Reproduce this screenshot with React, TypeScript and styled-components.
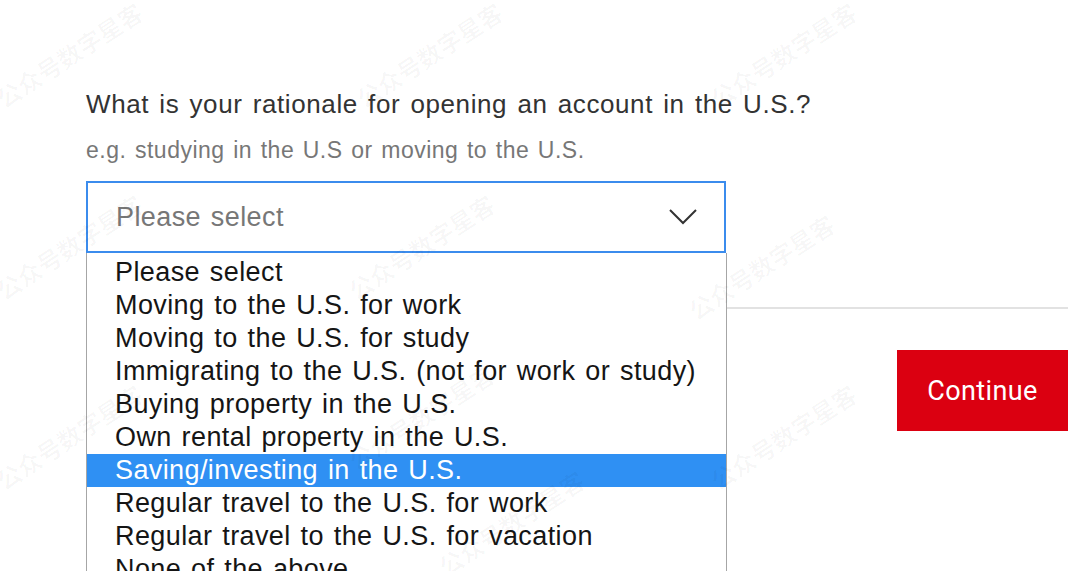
import React from "react";
import styled, { createGlobalStyle } from "styled-components";

const Global = createGlobalStyle`
  html, body { margin: 0; padding: 0; background: #fff; }
  body { font-family: "Liberation Sans", Arial, sans-serif; }
  * { box-sizing: border-box; }
`;

const Page = styled.div`
  position: relative;
  width: 1080px;
  height: 571px;
  overflow: hidden;
  background: #fff;
`;

const Form = styled.div`
  display: flex;
  flex-direction: column;
  width: 982px;
  margin-left: 86px;
  padding-top: 87px;
`;

const Question = styled.h2`
  margin: 0;
  font-weight: 400;
  font-size: 26px;
  line-height: 34px;
  letter-spacing: 0.6px;
  word-spacing: 2.4px;
  color: #333;
`;

const Hint = styled.p`
  margin: 16px 0 0 0;
  font-size: 23px;
  line-height: 26px;
  letter-spacing: 0.5px;
  word-spacing: 1.7px;
  color: #777;
`;

const SelectWrap = styled.div`
  position: relative;
  width: 640px;
  margin-top: 18px;
`;

const SelectBox = styled.div`
  display: flex;
  align-items: center;
  justify-content: space-between;
  height: 72px;
  border: 2px solid #3b8ced;
  padding: 0 26px 0 28px;
  font-size: 27px;
  letter-spacing: 0.4px;
  word-spacing: 2px;
  color: #777;
`;

const Chevron = () => (
  <svg width="30" height="18" viewBox="0 0 30 18" fill="none">
    <path d="M2 2 L15 15 L28 2" stroke="#333" strokeWidth="2" />
  </svg>
);

const Dropdown = styled.ul`
  position: absolute;
  left: 0;
  top: 72px;
  width: 641px;
  margin: 0;
  padding: 3px 0 0 0;
  list-style: none;
  background: #fff;
  border-left: 1px solid #a6a6a6;
  border-right: 1px solid #a6a6a6;
  z-index: 2;
`;

const Option = styled.li<{ $active?: boolean }>`
  height: 33px;
  line-height: 33px;
  padding-left: 28px;
  font-size: 27px;
  letter-spacing: 0.4px;
  word-spacing: 2px;
  color: ${(p) => (p.$active ? "#fff" : "#151515")};
  background: ${(p) => (p.$active ? "#2f90f3" : "transparent")};
  white-space: nowrap;
`;

const Divider = styled.hr`
  margin: 54px 0 0 0;
  border: 0;
  border-top: 2px solid #e2e2e2;
  width: 100%;
`;

const Actions = styled.div`
  display: flex;
  justify-content: flex-end;
  margin-top: 41px;
`;

const ContinueButton = styled.button`
  width: 171px;
  height: 81px;
  border: 0;
  background: #db0011;
  color: #fff;
  font-family: Roboto, "Liberation Sans", Arial, sans-serif;
  font-size: 27px;
  letter-spacing: 0.4px;
  cursor: pointer;
`;

const Watermark = styled.span`
  position: absolute;
  font-family: "Noto Sans CJK SC", sans-serif;
  font-size: 24px;
  font-weight: 700;
  color: rgba(0, 0, 0, 0.03);
  transform: rotate(-33deg);
  transform-origin: left bottom;
  white-space: nowrap;
  pointer-events: none;
  z-index: 3;
`;

const options = [
  "Please select",
  "Moving to the U.S. for work",
  "Moving to the U.S. for study",
  "Immigrating to the U.S. (not for work or study)",
  "Buying property in the U.S.",
  "Own rental property in the U.S.",
  "Saving/investing in the U.S.",
  "Regular travel to the U.S. for work",
  "Regular travel to the U.S. for vacation",
  "None of the above",
];

const marks = [
  [8, 80], [368, 80], [722, 80],
  [8, 272], [360, 272], [700, 292],
  [8, 462], [360, 442], [722, 462],
  [450, 548],
];

export default function App() {
  return (
    <Page>
      <Global />
      <Form>
        <Question>What is your rationale for opening an account in the U.S.?</Question>
        <Hint>e.g. studying in the U.S or moving to the U.S.</Hint>
        <SelectWrap>
          <SelectBox>
            <span>Please select</span>
            <Chevron />
          </SelectBox>
          <Dropdown>
            {options.map((o, i) => (
              <Option key={o} $active={i === 6}>
                {o}
              </Option>
            ))}
          </Dropdown>
        </SelectWrap>
        <Divider />
        <Actions>
          <ContinueButton>Continue</ContinueButton>
        </Actions>
      </Form>
      {marks.map(([x, y], i) => (
        <Watermark key={i} style={{ left: x, top: y }}>
          公众号数字星客
        </Watermark>
      ))}
    </Page>
  );
}
